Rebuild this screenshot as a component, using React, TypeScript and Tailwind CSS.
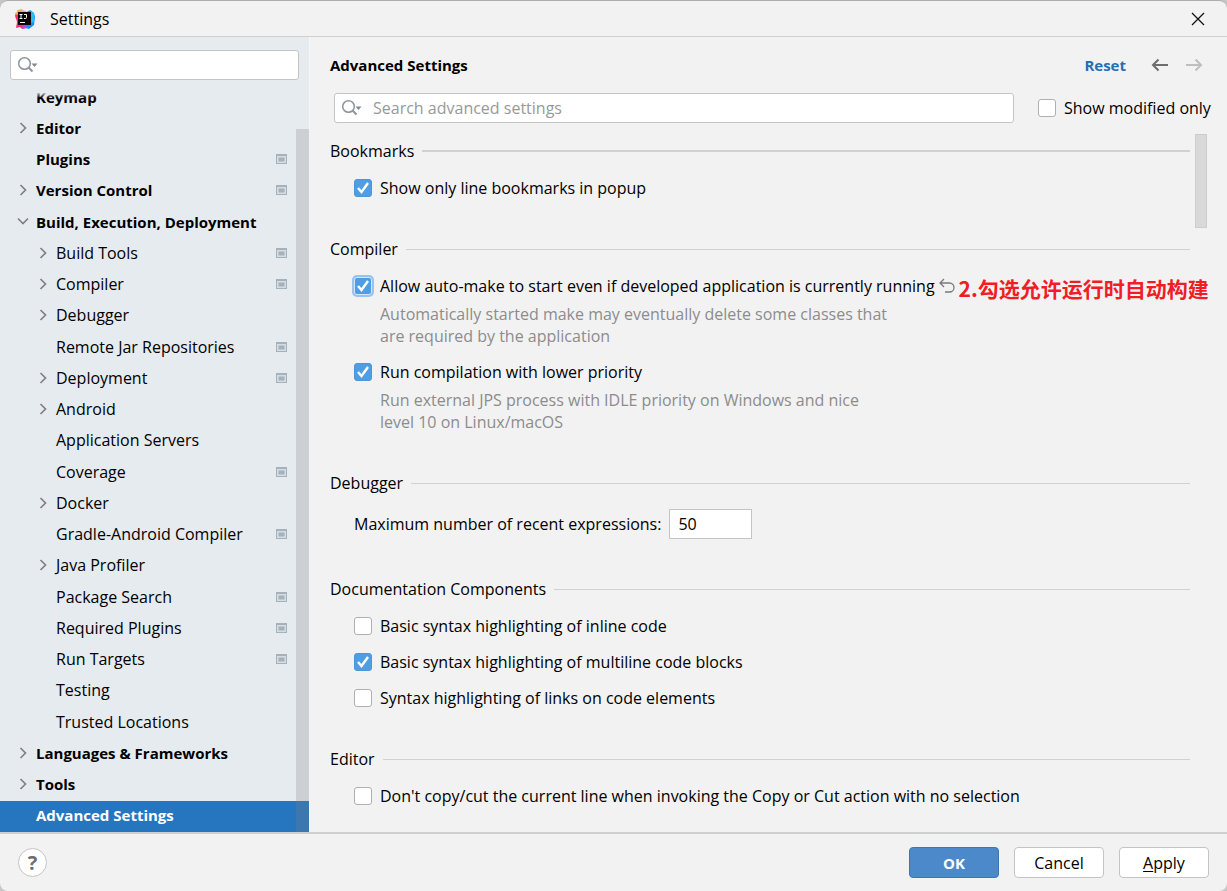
import React, { useState } from "react"

type TreeItem = {
  name: string
  level: 0 | 1
  arrow?: "right" | "down"
  project?: boolean
  selected?: boolean
}

const tree: TreeItem[] = [
  { name: "Keymap", level: 0 },
  { name: "Editor", level: 0, arrow: "right" },
  { name: "Plugins", level: 0, project: true },
  { name: "Version Control", level: 0, arrow: "right", project: true },
  { name: "Build, Execution, Deployment", level: 0, arrow: "down" },
  { name: "Build Tools", level: 1, arrow: "right", project: true },
  { name: "Compiler", level: 1, arrow: "right", project: true },
  { name: "Debugger", level: 1, arrow: "right" },
  { name: "Remote Jar Repositories", level: 1, project: true },
  { name: "Deployment", level: 1, arrow: "right", project: true },
  { name: "Android", level: 1, arrow: "right" },
  { name: "Application Servers", level: 1 },
  { name: "Coverage", level: 1, project: true },
  { name: "Docker", level: 1, arrow: "right" },
  { name: "Gradle-Android Compiler", level: 1, project: true },
  { name: "Java Profiler", level: 1, arrow: "right" },
  { name: "Package Search", level: 1, project: true },
  { name: "Required Plugins", level: 1, project: true },
  { name: "Run Targets", level: 1, project: true },
  { name: "Testing", level: 1 },
  { name: "Trusted Locations", level: 1 },
  { name: "Languages & Frameworks", level: 0, arrow: "right" },
  { name: "Tools", level: 0, arrow: "right" },
  { name: "Advanced Settings", level: 0, selected: true },
]

const Logo = () => (
  <svg width="20" height="20" viewBox="0 0 20 20" aria-hidden="true">
    <path d="M0 4l2-1 0-2 5-1 3 4-5 6-5-1z" fill="#fdae4d" />
    <path d="M0 6l5-1 2 9 6 1-2 4-4 1-2-2-4 1 1-6z" fill="#fb2c72" />
    <path d="M7 1l4 1 2 2-5 2z" fill="#d9a3dd" />
    <path d="M12 3l3-2 4 3 1 4-1 8-5 4-4-1-1-3z" fill="#1b8dfb" />
    <path d="M16 2l3 2v9l-3 1z" fill="#21c0f8" />
    <path d="M8 15l4 1-1 3-4 1z" fill="#b44bd8" />
    <rect x="3" y="3" width="13" height="13" fill="#0b0508" />
    <path d="M4.500 5.500h3M6 5.500v4M4.500 9.500h3M9 5.500h2.500v3q0 1-1.200 1H9" fill="none" stroke="#fff" />
    <path d="M5 13.500h5" stroke="#fff" />
  </svg>
)

const Chevron = ({ dir }: { dir: "right" | "down" }) => (
  <svg width="12" height="12" viewBox="0 0 12 12" fill="none" stroke="#7f8283" strokeWidth="1.700" aria-hidden="true">
    <path d={dir === "right" ? "M3.500 1l5 5-5 5" : "M1 2.500l5 5 5-5"} />
  </svg>
)

const ProjectIcon = () => (
  <svg width="11" height="10" viewBox="0 0 11 10" aria-hidden="true">
    <rect width="11" height="10" fill="#a6b2bb" />
    <rect x="1" y="2" width="9" height="7" fill="#d5dce2" />
    <rect x="2.500" y="3.500" width="6" height="4" fill="#a6b2bb" />
  </svg>
)

const SearchIcon = () => (
  <svg width="22" height="18" viewBox="0 0 22 18" fill="none" aria-hidden="true">
    <circle cx="7.500" cy="7.500" r="5.800" stroke="#8d959b" strokeWidth="1.500" />
    <path d="M11.500 11.500l4 4" stroke="#8d959b" strokeWidth="1.900" />
    <path d="M14.500 7.500h6l-3 3.500z" fill="#7f8b91" />
  </svg>
)

const Arrow = ({ dir }: { dir: "left" | "right" }) => (
  <svg width="18" height="14" viewBox="0 0 18 14" fill="none" stroke="currentColor" strokeWidth="2" aria-hidden="true">
    <path d={dir === "left" ? "M7.500 1.500L2 7l5.500 5.500M2 7h15" : "M10.500 1.500L16 7l-5.500 5.500M16 7H1"} />
  </svg>
)

const Checkbox = ({
  label,
  checked = false,
  focused = false,
}: {
  label: string
  checked?: boolean
  focused?: boolean
}) => {
  const [on, setOn] = useState(checked)
  return (
    <label className="flex items-center gap-2 whitespace-nowrap">
      <span className="relative block size-[18px] shrink-0">
        <input
          type="checkbox"
          checked={on}
          onChange={() => setOn(!on)}
          className={`block size-[18px] appearance-none rounded-[3px] border border-[#b0b0b0] bg-white checked:border-[#4a96dd] checked:bg-[#4f9ee3] ${
            focused ? "ring-2 ring-[#97c3f3] checked:border-[#d3e6fa]" : ""
          }`}
        />
        {on && (
          <svg
            className="pointer-events-none absolute inset-0"
            width="18"
            height="18"
            viewBox="0 0 18 18"
            fill="none"
            stroke="#fff"
            strokeWidth="2.400"
            aria-hidden="true"
          >
            <path d="M4 9l3.500 4L14 4" />
          </svg>
        )}
      </span>
      <span>{label}</span>
    </label>
  )
}

const Section = ({
  title,
  thick = false,
  children,
}: {
  title: string
  thick?: boolean
  children: React.ReactNode
}) => (
  <section className="pb-[31px] last:pb-4">
    <div className="flex h-6 items-center gap-2">
      <h2>{title}</h2>
      <div className={`flex-1 bg-[#d1d1d1] ${thick ? "h-[2px]" : "h-px"}`} />
    </div>
    <div className="pt-[7px] pl-6">{children}</div>
  </section>
)

const Row = ({ children }: { children: React.ReactNode }) => (
  <div className="flex h-9 items-center">{children}</div>
)

const Hint = ({ children }: { children: React.ReactNode }) => (
  <p className="-mt-px pb-[7px] pl-[26px] leading-[22px] text-[#8c8c8c]">{children}</p>
)

const Sidebar = () => (
  <aside className="flex w-[310px] shrink-0 flex-col border-r border-[#f4f5f6] bg-[#e6ebf0]">
    <div className="px-[10px] pt-[13px]">
      <label className="flex h-[30px] items-center rounded-[3px] border border-[#c4c4c4] bg-white pl-[6px]">
        <SearchIcon />
        <input type="text" aria-label="Search settings" className="min-w-0 flex-1 px-2 outline-none" />
      </label>
    </div>
    <nav className="relative mt-[2px] grid flex-1 auto-rows-fr">
      {tree.map((item) => (
        <a
          key={item.name}
          href="#"
          className={`flex items-center gap-[7px] pr-[22px] pb-[2px] ${
            item.level === 0 ? "pl-[17px] text-[15px] font-bold" : "pl-[37px]"
          } ${item.selected ? "bg-[#2675bf] text-white" : ""}`}
        >
          <span className="w-3">{item.arrow && <Chevron dir={item.arrow} />}</span>
          <span className="flex-1 whitespace-nowrap">{item.name}</span>
          {item.project && <ProjectIcon />}
        </a>
      ))}
      <div className="absolute inset-x-0 top-0 h-[16px] bg-linear-to-b from-[#e6ebf0] from-60% to-transparent" />
      <div className="absolute top-[47px] right-0 bottom-0 w-[13px] bg-[#808080]/25" />
    </nav>
  </aside>
)

const App: React.FC = () => {
  return (
    <div className="bg-[#c6c6c6] font-['Open_Sans','Noto_Sans_CJK_SC',sans-serif] text-[16px] leading-5 text-black">
      <div className="flex min-h-screen flex-col overflow-hidden rounded-lg border-t border-[#adadad] bg-[#f2f2f2]">
        <header className="flex h-9 shrink-0 items-center border-b border-[#cfcfcf] pr-[22px] pl-[15px]">
          <Logo />
          <h1 className="ml-[15px] flex-1">Settings</h1>
          <button aria-label="Close">
            <svg width="14" height="14" viewBox="0 0 14 14" stroke="#111" strokeWidth="1.300" aria-hidden="true">
              <path d="M1 1l12 12M13 1L1 13" />
            </svg>
          </button>
        </header>

        <div className="flex flex-1">
          <Sidebar />

          <main className="min-w-0 flex-1 px-5">
            <div className="flex h-14 items-center pr-1 text-[15px] font-bold">
              <h2 className="flex-1">Advanced Settings</h2>
              <a href="#" className="text-[#2470b3]">
                Reset
              </a>
              <button aria-label="Back" className="ml-[25px] text-[#6e6e6e]">
                <Arrow dir="left" />
              </button>
              <button aria-label="Forward" className="ml-4 text-[#bfbfbf]" disabled>
                <Arrow dir="right" />
              </button>
            </div>

            <div className="flex items-center">
              <label className="ml-1 flex h-[30px] flex-1 items-center rounded-[3px] border border-[#c4c4c4] bg-white pl-[6px]">
                <SearchIcon />
                <input
                  type="text"
                  aria-label="Search advanced settings"
                  placeholder="Search advanced settings"
                  className="min-w-0 flex-1 px-[10px] outline-none placeholder:text-[#999999]"
                />
              </label>
              <div className="ml-6 w-[169px]">
                <Checkbox label="Show modified only" />
              </div>
            </div>

            <div className="flex pt-[11px]">
              <div className="mt-[5px] min-w-0 flex-1">
                <Section title="Bookmarks" thick>
                  <Row>
                    <Checkbox label="Show only line bookmarks in popup" checked />
                  </Row>
                </Section>

                <Section title="Compiler">
                  <Row>
                    <Checkbox
                      label="Allow auto-make to start even if developed application is currently running"
                      checked
                      focused
                    />
                    <button aria-label="Restore default" className="ml-1 shrink-0">
                      <svg width="16" height="16" viewBox="0 0 16 16" fill="none" stroke="#7a7a7a" strokeWidth="1.300" aria-hidden="true">
                        <path d="M5 1L1 5l4 4M1 5h9.500a4 4 0 0 1 0 9H6" />
                      </svg>
                    </button>
                    <strong className="ml-1 pt-1 text-[21px] font-bold whitespace-nowrap text-[#f01d24] font-['Noto_Sans_CJK_SC',sans-serif]">
                      2.勾选允许运行时自动构建
                    </strong>
                  </Row>
                  <Hint>
                    Automatically started make may eventually delete some classes that
                    <br />
                    are required by the application
                  </Hint>
                  <Row>
                    <Checkbox label="Run compilation with lower priority" checked />
                  </Row>
                  <Hint>
                    Run external JPS process with IDLE priority on Windows and nice
                    <br />
                    level 10 on Linux/macOS
                  </Hint>
                </Section>

                <Section title="Debugger">
                  <div className="flex h-11 items-center gap-2">
                    <label htmlFor="max-expressions">Maximum number of recent expressions:</label>
                    <input
                      id="max-expressions"
                      type="text"
                      defaultValue="50"
                      className="h-[30px] w-[83px] border border-[#c4c4c4] bg-white px-2"
                    />
                  </div>
                </Section>

                <Section title="Documentation Components">
                  <Row>
                    <Checkbox label="Basic syntax highlighting of inline code" />
                  </Row>
                  <Row>
                    <Checkbox label="Basic syntax highlighting of multiline code blocks" checked />
                  </Row>
                  <Row>
                    <Checkbox label="Syntax highlighting of links on code elements" />
                  </Row>
                </Section>

                <Section title="Editor">
                  <Row>
                    <Checkbox label="Don't copy/cut the current line when invoking the Copy or Cut action with no selection" />
                  </Row>
                </Section>
              </div>
              <div className="ml-[5px] h-[94px] w-3 shrink-0 border border-[#cdcdcd] bg-[#d9d9d9]" />
            </div>
          </main>
        </div>

        <footer className="flex h-[59px] shrink-0 items-center gap-[15px] border-t-2 border-[#cfcfcf] px-[18px]">
          <button
            aria-label="Help"
            className="mr-auto size-[29px] rounded-full border border-[#c4c4c4] bg-white text-xl font-bold text-[#6e6e6e]"
          >
            ?
          </button>
          <button className="h-[31px] w-[90px] rounded-[4px] border border-[#3d75b5] bg-[#4c89ca] text-[15px] font-bold text-white">
            OK
          </button>
          <button className="h-[31px] w-[90px] rounded-[4px] border border-[#c4c4c4] bg-white">Cancel</button>
          <button className="h-[31px] w-[90px] rounded-[4px] border border-[#c4c4c4] bg-white">
            <span className="underline underline-offset-2">A</span>pply
          </button>
        </footer>
      </div>
    </div>
  )
}

export default App
